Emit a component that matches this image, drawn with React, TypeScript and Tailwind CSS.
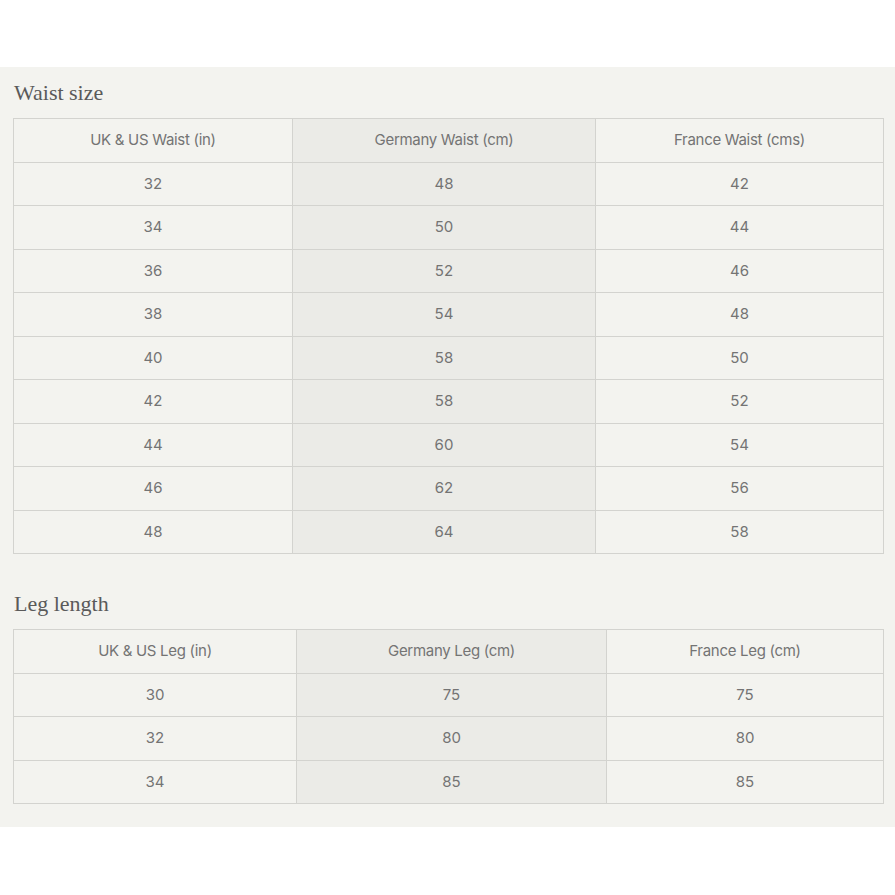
import React from "react";

const waist = [
  [32, 48, 42],
  [34, 50, 44],
  [36, 52, 46],
  [38, 54, 48],
  [40, 58, 50],
  [42, 58, 52],
  [44, 60, 54],
  [46, 62, 56],
  [48, 64, 58],
];
const leg = [
  [30, 75, 75],
  [32, 80, 80],
  [34, 85, 85],
];

function SizeTable({
  headers,
  rows,
  widths,
}: {
  headers: string[];
  rows: number[][];
  widths: string[];
}) {
  return (
    <table className="w-full border-collapse table-fixed">
      <colgroup>
        {widths.map((w, i) => (
          <col key={i} style={{ width: w }} />
        ))}
      </colgroup>
      <thead>
        <tr className="h-[43.5px]">
          {headers.map((h, i) => (
            <th
              key={i}
              className={`border border-[#d3d3cf] font-normal text-[15px] text-[#747474] tracking-[-0.3px] ${
                i === 1 ? "bg-[#ebebe7]" : ""
              }`}
            >
              {h}
            </th>
          ))}
        </tr>
      </thead>
      <tbody>
        {rows.map((r, ri) => (
          <tr key={ri} className="h-[43.5px]">
            {r.map((c, i) => (
              <td
                key={i}
                className={`border border-[#d3d3cf] text-center text-[15px] text-[#747474] ${
                  i === 1 ? "bg-[#ebebe7]" : ""
                }`}
              >
                {c}
              </td>
            ))}
          </tr>
        ))}
      </tbody>
    </table>
  );
}

export default function App() {
  return (
    <div className="h-[895px] overflow-hidden bg-white pt-[67px]" style={{ fontFamily: "Inter, 'Liberation Sans', sans-serif" }}>
      <div className="bg-[#f3f3ef] px-[13px] pb-[23px]">
        <div className="h-[51px] flex items-center pl-px">
          <h2
            className="text-[22px] text-[#5a5a5a]"
            style={{ fontFamily: "'Liberation Serif', serif" }}
          >
            Waist size
          </h2>
        </div>
        <SizeTable
          headers={["UK & US Waist (in)", "Germany Waist (cm)", "France Waist (cms)"]}
          rows={waist}
          widths={["279px", "303px", "288px"]}
        />
        <div className="h-[51px] mt-[24px] flex items-center pl-px">
          <h2
            className="text-[22px] text-[#5a5a5a]"
            style={{ fontFamily: "'Liberation Serif', serif" }}
          >
            Leg length
          </h2>
        </div>
        <SizeTable
          headers={["UK & US Leg (in)", "Germany Leg (cm)", "France Leg (cm)"]}
          rows={leg}
          widths={["283px", "310px", "277px"]}
        />
      </div>
    </div>
  );
}
